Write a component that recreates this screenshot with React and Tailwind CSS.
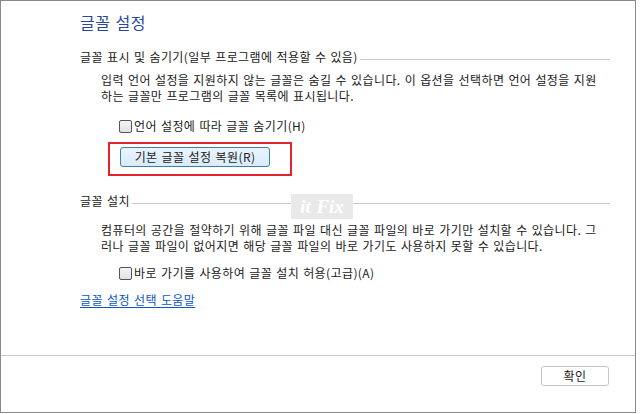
export default function App() {
  const font = { fontFamily: '"Noto Sans CJK KR", "Noto Sans", sans-serif' };
  const Checkbox = () => (
    <span className="inline-block w-[13px] h-[13px] border border-[#555] rounded-[2px] bg-gradient-to-b from-[#f4f4f4] to-[#e2e2e2] mr-[2px] shrink-0" />
  );
  const Heading = ({ children }) => (
    <div className="flex items-center h-4 pr-[25px]">
      <span className="leading-4 whitespace-nowrap">{children}</span>
      <span className="flex-1 h-px bg-[#c8c8c8] ml-[2px] mt-[5px]" />
    </div>
  );
  return (
    <div className="w-[640px] h-[414px] bg-white text-[12px] text-[#1a1a1a] tracking-[0.4px] [word-spacing:1px]" style={font}>
      <div className="relative w-[636px] h-[413px] border-t border-l border-r border-b border-[#8a8a8a] flex flex-col">
        <div className="h-[354px] pl-[79px] pt-[11px] flex flex-col">
          <div className="text-[16px] leading-5 text-[#2746a0] tracking-[0.5px]">글꼴 설정</div>
          <div className="mt-[17px]">
            <Heading>글꼴 표시 및 숨기기(일부 프로그램에 적용할 수 있음)</Heading>
          </div>
          <div className="mt-[7px] pl-[21px] leading-4">
            <div>입력 언어 설정을 지원하지 않는 글꼴은 숨길 수 있습니다. 이 옵션을 선택하면 언어 설정을 지원</div>
            <div>하는 글꼴만 프로그램의 글꼴 목록에 표시됩니다.</div>
          </div>
          <div className="mt-[14px] pl-[39px] h-4 flex items-center leading-4">
            <Checkbox />
            <span>언어 설정에 따라 글꼴 숨기기(H)</span>
          </div>
          <div className="mt-[8px] ml-[28px] w-[184px] h-[34px] border-2 border-[#e3242b] pl-[10px] pt-[3px]">
            <div className="w-[150px] h-[20px] rounded-[3px] border border-[#3c7fb1] bg-gradient-to-b from-[#eaf4fc] to-[#d9ebfb] flex items-center justify-center leading-4">
              기본 글꼴 설정 복원(R)
            </div>
          </div>
          <div className="mt-[17px]">
            <Heading>글꼴 설치</Heading>
          </div>
          <div className="mt-[13px] pl-[21px] leading-4">
            <div>컴퓨터의 공간을 절약하기 위해 글꼴 파일 대신 글꼴 파일의 바로 가기만 설치할 수 있습니다. 그</div>
            <div>러나 글꼴 파일이 없어지면 해당 글꼴 파일의 바로 가기도 사용하지 못할 수 있습니다.</div>
          </div>
          <div className="mt-[11px] pl-[39px] h-4 flex items-center leading-4">
            <Checkbox />
            <span>바로 가기를 사용하여 글꼴 설치 허용(고급)(A)</span>
          </div>
          <div className="mt-[11px] leading-4">
            <span className="text-[#0a58c8] underline underline-offset-2">글꼴 설정 선택 도움말</span>
          </div>
        </div>
        <div className="border-t border-[#c8c8c8] flex-1 flex justify-end pr-[26px] pt-[10px]">
          <div className="w-[68px] h-[20px] rounded-[3px] border border-[#c4c4c4] bg-white flex items-center justify-center leading-4">
            확인
          </div>
        </div>
        <div
          className="absolute left-[290px] top-[193px] w-[62px] h-[25px] bg-[#e9e9e9] text-white italic font-bold text-[19px] leading-[25px] flex items-center justify-center tracking-normal"
          style={{ fontFamily: '"Liberation Serif", serif' }}
        >
          it Fix
        </div>
      </div>
    </div>
  );
}
